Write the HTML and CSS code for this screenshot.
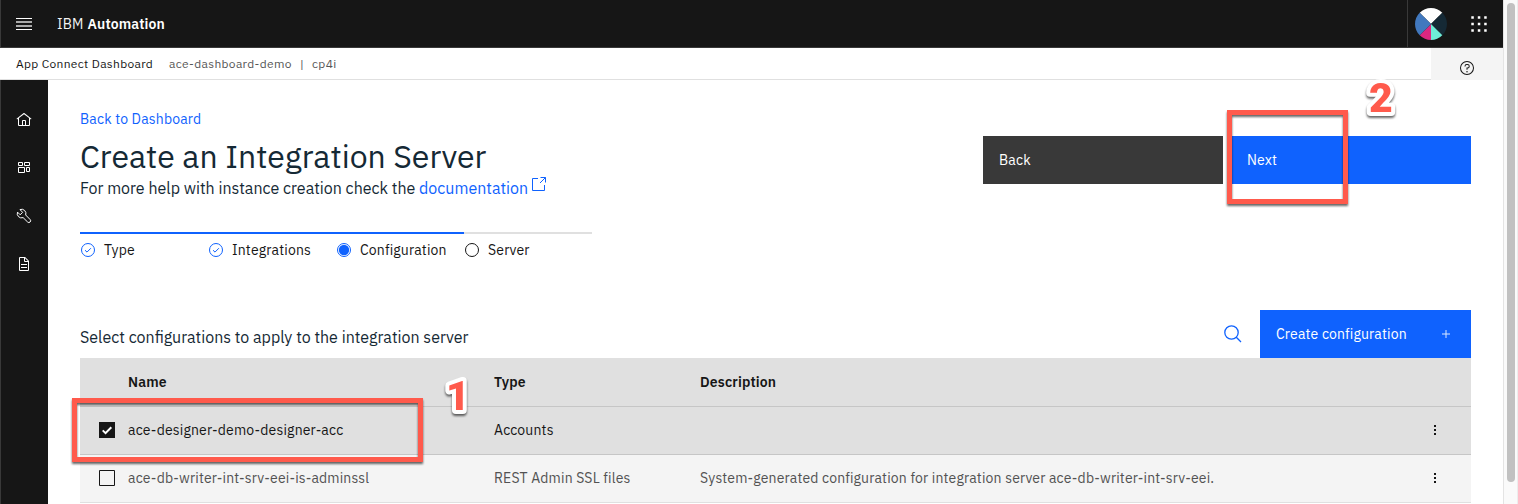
FILE: index.html
```html
<!DOCTYPE html>
<html lang="en">
<head>
<meta charset="utf-8">
<title>Create an Integration Server</title>
<link rel="stylesheet" href="styles.css">
</head>
<body>
<div class="window">
  <div class="app">
    <header class="topbar">
      <svg class="menu" width="16" height="12" viewBox="0 0 16 12"><path fill="#fff" d="M0 0h16v1H0zM0 11h16v1H0z"/><path fill="#aaa" d="M0 3h16v2H0zM0 7h16v2H0z"/></svg>
      <div class="brand"><span class="brand-ibm">IBM</span><b>Automation</b></div>
      <div class="tools">
        <svg width="32" height="32" viewBox="0 0 32 32"><path fill="#fff" d="M16 16 4.7 4.7a16 16 0 0 1 22.6 0z"/><path fill="#152935" d="M16 16 27.3 4.7a16 16 0 0 1 0 22.6z"/><path fill="#6eedd8" d="m16 16 11.3 11.3A16 16 0 0 1 16 32z"/><path fill="#db2780" d="M16 16v16a16 16 0 0 1-11.3-4.7z"/><path fill="#4178be" d="M16 16 4.7 27.3a16 16 0 0 1 0-22.6z"/></svg>
        <svg class="switcher" width="16" height="16" viewBox="0 0 16 16" fill="#fff"><path d="M.3.3h2.500v2.500H.3zM6.800.3h2.500v2.500H6.800zM13.200.3h2.500v2.500h-2.500zM.3 6.800h2.500v2.500H.3zM6.800 6.800h2.500v2.500H6.800zM13.200 6.800h2.500v2.500h-2.500zM.3 13.200h2.500v2.500H.3zM6.800 13.200h2.500v2.500H6.800zM13.200 13.200h2.500v2.500h-2.500z"/></svg>
      </div>
    </header>
    <div class="subbar">
      <div class="crumbs">
        <span class="crumb-app">App Connect Dashboard</span>
        <span class="crumb-instance">ace-dashboard-demo</span>
        <span class="crumb-sep">|</span>
        <span>cp4i</span>
      </div>
      <div class="help">
        <svg width="16" height="16" viewBox="0 0 32 32" fill="#161616"><path d="M16 2a14 14 0 1 0 14 14A14 14 0 0 0 16 2zm0 26a12 12 0 1 1 12-12 12 12 0 0 1-12 12z"/><circle cx="16" cy="23.5" r="1.5"/><path d="M17 8h-1.5a4.49 4.49 0 0 0-4.5 4.500v.5h2v-.5a2.500 2.500 0 0 1 2.500-2.500H17a2.500 2.500 0 0 1 0 5h-2v4.500h2V17a4.500 4.500 0 0 0 0-9z"/></svg>
      </div>
    </div>
    <div class="body">
      <nav class="rail">
        <svg width="16" height="16" viewBox="0 0 32 32" fill="#fff"><path d="M16.612 2.214a1.010 1.010 0 0 0-1.242 0L1 13.419l1.243 1.572L4 13.621V26a2.004 2.004 0 0 0 2 2h20a2.004 2.004 0 0 0 2-2V13.630L29.757 15 31 13.428zM18 26h-4v-8h4zm2 0v-8a2.002 2.002 0 0 0-2-2h-4a2.002 2.002 0 0 0-2 2v8H6V12.062l10-7.790 10 7.800V26z"/></svg>
        <svg width="16" height="16" viewBox="0 0 16 16" fill="none" stroke="#fff"><path d="M2.500 2.500h4v3h-4zM8.500 2.500h5v3h-5zM2.500 7.500h6v5h-6zM10.500 7.500h3v4h-3z"/></svg>
        <svg width="16" height="16" viewBox="0 0 16 16" fill="none" stroke="#fff" stroke-linejoin="round"><path d="M4 1.600A4.300 4.300 0 0 1 9.700 7l4.400 4.500a1.750 1.750 0 0 1-2.500 2.500L7.100 9.600A4.300 4.300 0 0 1 1.500 4.100l2.700 2.700 2.400-2.500z"/></svg>
        <svg width="16" height="16" viewBox="0 0 32 32" fill="#fff"><path d="m25.700 9.300-7-7A.908.908 0 0 0 18 2H8a2.006 2.006 0 0 0-2 2v24a2.006 2.006 0 0 0 2 2h16a2.006 2.006 0 0 0 2-2V10a.908.908 0 0 0-.3-.7zM18 4.400l5.600 5.600H18zM24 28H8V4h8v6a2.006 2.006 0 0 0 2 2h6zM10 22h12v2H10zM10 16h12v2H10z"/></svg>
      </nav>
      <main class="content">
        <div class="heading">
          <div class="intro">
            <a class="back-link">Back to Dashboard</a>
            <h1>Create an Integration Server</h1>
            <p class="lead">For more help with instance creation check the <a>documentation</a><svg class="launch" width="14" height="14" viewBox="0 0 14 14" fill="none" stroke="#0f62fe"><path d="M6 1.500H.5v12h12V8M8.500.5h5v5M13.500.5l-5.500 5.500"/></svg></p>
          </div>
          <div class="actions">
            <button class="btn btn-dark">Back</button>
            <button class="btn">Next</button>
          </div>
        </div>
        <ol class="progress">
          <li class="done"><svg width="16" height="16" viewBox="0 0 16 16" fill="none" stroke="#0f62fe"><circle cx="8" cy="8" r="6.500"/><path d="m5 8.200 2 1.900 3.900-3.900"/></svg><span>Type</span></li>
          <li class="done"><svg width="16" height="16" viewBox="0 0 16 16" fill="none" stroke="#0f62fe"><circle cx="8" cy="8" r="6.500"/><path d="m5 8.200 2 1.900 3.900-3.900"/></svg><span>Integrations</span></li>
          <li class="done"><svg width="16" height="16" viewBox="0 0 16 16"><circle cx="8" cy="8" r="6.500" fill="none" stroke="#0f62fe"/><circle cx="8" cy="8" r="5.200" fill="#0f62fe"/></svg><span>Configuration</span></li>
          <li><svg width="16" height="16" viewBox="0 0 16 16" fill="none" stroke="#161616"><circle cx="8" cy="8" r="6.500"/></svg><span>Server</span></li>
        </ol>
        <div class="toolbar">
          <h2>Select configurations to apply to the integration server</h2>
          <svg class="search" width="18" height="18" viewBox="0 0 18 18" fill="none" stroke="#0f62fe" stroke-width="1.300"><circle cx="7.500" cy="7.500" r="6.700"/><path d="m12.300 12.300 4.700 4.700"/></svg>
          <button class="btn btn-create"><span>Create configuration</span><svg width="8" height="8" viewBox="0 0 8 8" stroke="#dbe8ff"><path d="M0 4h8M4 0v8"/></svg></button>
        </div>
        <div class="table">
          <div class="row head"><span></span><span>Name</span><span>Type</span><span>Description</span><span></span></div>
          <div class="row selected">
            <svg class="check" width="16" height="16" viewBox="0 0 16 16"><path fill="#161616" d="M0 0h16v16H0z"/><path d="m3.700 8.400 2.800 2.700 5.800-5.800" fill="none" stroke="#fff" stroke-width="2"/></svg>
            <span>ace-designer-demo-designer-acc</span><span>Accounts</span><span></span>
            <svg class="kebab" width="2" height="10" viewBox="0 0 2 10" fill="#161616"><path d="M0 0h2v2H0zM0 4h2v2H0zM0 8h2v2H0z"/></svg>
          </div>
          <div class="row">
            <svg class="check" width="16" height="16" viewBox="0 0 16 16"><path fill="none" stroke="#161616" d="M.5.5h15v15H.5z"/></svg>
            <span>ace-db-writer-int-srv-eei-is-adminssl</span><span>REST Admin SSL files</span><span>System-generated configuration for integration server ace-db-writer-int-srv-eei.</span>
            <svg class="kebab" width="2" height="10" viewBox="0 0 2 10" fill="#161616"><path d="M0 0h2v2H0zM0 4h2v2H0zM0 8h2v2H0z"/></svg>
          </div>
        </div>
      </main>
    </div>
  </div>
  <div class="scrollbar"><div class="thumb"></div></div>
  <div class="mark mark-row"></div>
  <div class="mark mark-next"></div>
  <svg class="digit digit-1" width="50" height="50"><text x="25" y="40" text-anchor="middle">1</text></svg>
  <svg class="digit digit-2" width="50" height="50"><text x="25" y="40" text-anchor="middle">2</text></svg>
</div>
</body>
</html>
```
FILE: styles.css
```css
* { box-sizing: border-box; }
body { margin: 0; font: 14px/18px "IBM Plex Sans", Roboto, sans-serif; letter-spacing: 0.16px; color: #161616; background: #fff; overflow: hidden; }
svg { display: block; flex: none; }
h1, h2, p, ol { margin: 0; padding: 0; font-weight: 400; letter-spacing: 0; }
a { color: #0f62fe; }

.window { position: relative; display: flex; height: 504px; overflow: hidden; }
.app { flex: 1; display: flex; flex-direction: column; min-width: 0; }

.topbar { display: flex; align-items: center; height: 48px; flex: none; padding-left: 15px; background: #161616; border-bottom: 1px solid #393939; border-left: 1px solid #393939; color: #fff; }
.brand { display: flex; margin-left: 25px; gap: 4px; letter-spacing: 0.13px; }
.brand-ibm { color: #f4f4f4; }
.brand b { font-weight: 600; }
.tools { display: flex; align-items: center; height: 47px; margin-left: auto; padding: 1px 16px 0 7px; border-left: 1px solid #393939; gap: 24px; }

.subbar { display: flex; height: 32px; flex: none; }
.crumbs { flex: 1; display: flex; padding: 7px 0 0 16px; font-size: 12px; letter-spacing: 0.32px; border-bottom: 1px solid #e0e0e0; color: #565656; }
.crumb-app { width: 153px; color: #161616; }
.crumb-instance { width: 131px; }
.crumb-sep { width: 12px; }
.help { width: 72px; padding: 12px 0 0 28px; background: #f4f4f4; }

.body { flex: 1; display: flex; min-height: 0; }
.rail { width: 48px; flex: none; display: flex; flex-direction: column; align-items: center; gap: 32px; padding-top: 32px; background: #161616; box-shadow: inset 1px 0 #393939; }
.content { flex: 1; min-width: 0; padding: 30px 32px 0; }

.heading { display: flex; justify-content: space-between; height: 122px; }
.intro { display: flex; flex-direction: column; }
h1 { margin-top: 8px; font-size: 32px; line-height: 40px; color: #152935; white-space: nowrap; }
.lead { display: flex; margin-top: 2px; font-size: 16px; line-height: 20px; color: #152935; white-space: pre; }
.launch { margin: -1px 0 0 4px; }
.actions { display: flex; gap: 8px; padding-top: 26px; }
.btn { width: 240px; height: 48px; padding: 0 16px; border: 0; background: #0f62fe; color: #fff; font: inherit; letter-spacing: inherit; text-align: left; }
.btn-dark { background: #393939; }

.progress { display: flex; width: 512px; list-style: none; letter-spacing: 0.16px; }
.progress li { display: flex; width: 128px; height: 78px; padding-top: 7px; gap: 8px; border-top: 2px solid #e0e0e0; }
.progress .done { border-color: #0f62fe; }
.progress svg { margin-top: 1px; }

.toolbar { display: flex; height: 48px; }
h2 { flex: 1; padding-top: 17px; font-size: 16px; line-height: 20px; color: #152935; }
.search { margin: 15px 18px 0 0; }
.btn-create { display: flex; align-items: center; justify-content: space-between; width: 211px; padding-right: 21px; }

.table { background: #f4f4f4; }
.row { display: grid; grid-template-columns: 48px 366px 206px 1fr 37px; align-items: center; height: 48px; padding-bottom: 1px; border-bottom: 1px solid #e0e0e0; color: #525252; white-space: nowrap; }
.head { height: 49px; padding-bottom: 0; background: #e0e0e0; border-color: #c6c6c6; color: #161616; font-weight: 600; }
.selected { background: #e0e0e0; border-color: #c6c6c6; color: #161616; }
.check { margin-left: 19px; }

.scrollbar { width: 15px; padding: 3px 0 0 3px; background: #fafafa; border-left: 1px solid #e4e4e4; border-right: 1px solid #ededed; }
.thumb { width: 8px; height: 479px; border-radius: 4px; background: #c1c1c1; }

/* Tutorial callouts drawn over the page */
.mark { position: absolute; border: 5px solid #ff5a4c; filter: drop-shadow(0 2px 1px rgba(0, 0, 0, 0.6)); }
.mark-row { left: 72px; top: 398px; width: 351px; height: 64px; }
.mark-next { left: 1227px; top: 110px; width: 121px; height: 94px; }
.digit { position: absolute; overflow: visible; filter: drop-shadow(0 2px 1px rgba(0, 0, 0, 0.6)); }
.digit text { font: 900 41px Roboto, sans-serif; letter-spacing: 0; fill: #ff5a4c; stroke: #fff; stroke-width: 8px; stroke-linejoin: round; paint-order: stroke; }
.digit-1 { left: 433px; top: 370px; }
.digit-2 { left: 1356px; top: 72px; }
```
